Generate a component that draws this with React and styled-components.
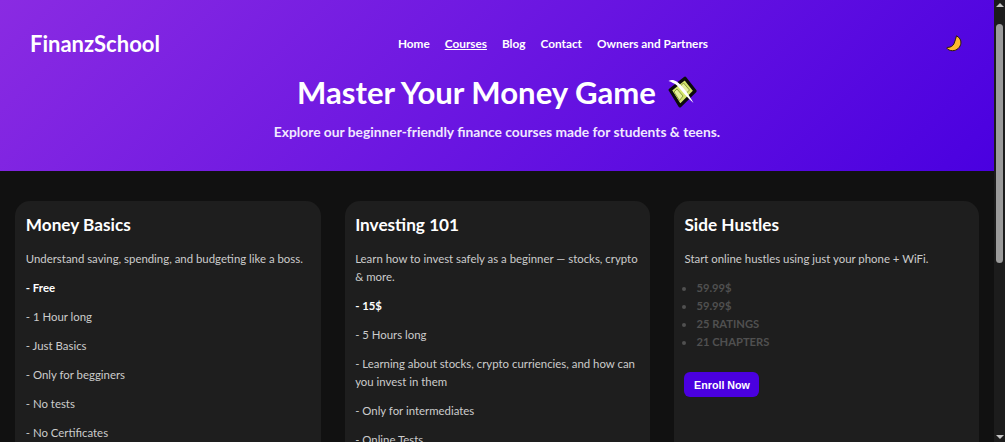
import React from "react";
import styled, { createGlobalStyle } from "styled-components";

const Global = createGlobalStyle`
  html { background: #111; }
  body { margin: 0; background: #111; font-family: "Lato", "Noto Sans", sans-serif; }
  html::-webkit-scrollbar { display: none; }
`;

const Page = styled.div`
  padding-right: 11px;
`;
const Scrollbar = styled.div`
  position: fixed;
  top: 0;
  right: 0;
  bottom: 0;
  width: 11px;
  background: #1c1c1c;
`;
const ScrollThumb = styled.div`
  position: absolute;
  top: 24px;
  left: 2px;
  width: 7px;
  height: 239px;
  border-radius: 4px;
  background: #9b9b9b;
`;
const ScrollArrow = styled.div`
  position: absolute;
  left: 2px;
  ${(p) => (p.$down ? "bottom: 3px;" : "top: 3px;")}
  border-left: 4px solid transparent;
  border-right: 4px solid transparent;
  ${(p) => (p.$down ? "border-top: 4px solid #c4c4c4;" : "border-bottom: 4px solid #c4c4c4;")}
`;

const Header = styled.header`
  height: 171px;
  box-sizing: border-box;
  padding-top: 28px;
  background: linear-gradient(135deg, #8a2be2, #4a00e0);
  color: #fff;
  text-align: center;
`;
const Nav = styled.nav`
  display: flex;
  justify-content: space-between;
  align-items: center;
  height: 30px;
  padding: 0 32px 0 30px;
`;
const Logo = styled.div`
  font-size: 22px;
  font-weight: 700;
`;
const Links = styled.div`
  display: flex;
  gap: 15px;
  font-size: 11.8px;
  font-weight: 700;
`;
const NavLink = styled.a`
  color: #fff;
  text-decoration: ${(p) => (p.$active ? "underline" : "none")};
`;
const Toggle = styled.div`
  display: flex;
`;
const Title = styled.h1`
  display: flex;
  justify-content: center;
  align-items: center;
  gap: 12px;
  margin: 14px 0 0;
  height: 40px;
  font-size: 31.100px;
  line-height: 40px;
  font-weight: 700;
`;
const Subtitle = styled.p`
  margin: 11px 0 0;
  font-size: 13.8px;
  line-height: 18px;
  font-weight: 700;
  color: #f1e8ff;
`;
const Grid = styled.main`
  display: grid;
  grid-template-columns: repeat(3, 1fr);
  gap: 24px;
  padding: 30px 14.700px 30px 15.300px;
  min-height: 558px;
  box-sizing: border-box;
`;
const Card = styled.section`
  background: #1e1e1e;
  border-radius: 15px;
  padding: 12px 10.500px;
`;
const CardTitle = styled.h2`
  margin: 0 0 13px;
  font-size: 17.200px;
  line-height: 24px;
  font-weight: 700;
  color: #fff;
`;
const Line = styled.p`
  margin: 0 0 11px;
  font-size: 11.400px;
  line-height: 18px;
  font-weight: ${(p) => (p.$bold ? 700 : 400)};
  color: ${(p) => (p.$bold ? "#fff" : "#ccc")};
`;
const Stats = styled.ul`
  margin: 0 0 21px;
  padding: 0 0 0 12px;
`;
const Stat = styled.li`
  font-size: 11.200px;
  line-height: 18px;
  font-weight: 700;
  color: #505050;
`;
const Enroll = styled.button`
  display: block;
  width: 75px;
  height: 25px;
  padding: 0;
  border: none;
  border-radius: 6px;
  background: #4a00e0;
  color: #fff;
  font-family: "Liberation Sans", Arial, sans-serif;
  font-size: 10.700px;
  font-weight: 700;
`;

const Moon = () => (
  <svg width="16" height="17" viewBox="0 0 16 17" aria-hidden="true">
    <path d="M10.500 .8c3 1.700 4.800 4.200 4.400 7.400-.4 4-4 7.500-8.400 7.500-2.500 0-4.600-.9-5.900-2.700.2-.4.5-.6 1-.6 3 0 5.200-1.300 6.400-3.700 1.100-2.500 1.700-5.200 2.500-7.900z" fill="#fdb92e" stroke="#2b1a05" strokeWidth="1" strokeLinejoin="round" />
  </svg>
);

const Money = () => (
  <svg width="29" height="32" viewBox="0 0 29 32" aria-hidden="true">
    <path d="M17 2.200 L27 15 L12 29.800 L2.200 14 Z" fill="#d3e56c" stroke="#0c0c0c" strokeWidth="3.200" strokeLinejoin="round" />
    <path d="M15.500 7 L21.500 14 L18 17.500 L12 10.500 Z" fill="#e4ef9a" stroke="#8d9f3c" strokeWidth="1" />
    <path d="M9 13 L15 20 L11.500 24.500 L6 16 Z" fill="#e4ef9a" stroke="#8d9f3c" strokeWidth="1" />
    <path d="M.5 5 C3 3.300 6 3.600 9 5.800 C14 9.500 20 17 25.500 27 C19 21.500 14 15 9 9.500 C6.500 7.500 3.500 6 .5 5 Z" fill="#fff" />
  </svg>
);

const links = ["Home", "Courses", "Blog", "Contact", "Owners and Partners"];

const courses = [
  {
    title: "Money Basics",
    intro: "Understand saving, spending, and budgeting like a boss.",
    price: "- Free",
    lines: ["- 1 Hour long", "- Just Basics", "- Only for begginers", "- No tests", "- No Certificates"],
  },
  {
    title: "Investing 101",
    intro: "Learn how to invest safely as a beginner — stocks, crypto & more.",
    price: "- 15$",
    lines: ["- 5 Hours long", "- Learning about stocks, crypto curriencies, and how can you invest in them", "- Only for intermediates", "- Online Tests"],
  },
  {
    title: "Side Hustles",
    intro: "Start online hustles using just your phone + WiFi.",
    stats: ["59.99$", "59.99$", "25 RATINGS", "21 CHAPTERS"],
  },
];

export default function App() {
  return (
    <>
      <Global />
      <Page>
        <Header>
          <Nav>
            <Logo>FinanzSchool</Logo>
            <Links>
              {links.map((l) => (
                <NavLink key={l} href="#" $active={l === "Courses"}>{l}</NavLink>
              ))}
            </Links>
            <Toggle><Moon /></Toggle>
          </Nav>
          <Title>Master Your Money Game <Money /></Title>
          <Subtitle>Explore our beginner-friendly finance courses made for students &amp; teens.</Subtitle>
        </Header>
        <Grid>
          {courses.map((c) => (
            <Card key={c.title}>
              <CardTitle>{c.title}</CardTitle>
              <Line>{c.intro}</Line>
              {c.price && <Line $bold>{c.price}</Line>}
              {c.lines && c.lines.map((l) => <Line key={l}>{l}</Line>)}
              {c.stats && (
                <Stats>
                  {c.stats.map((s, i) => <Stat key={i}>{s}</Stat>)}
                </Stats>
              )}
              <Enroll>Enroll Now</Enroll>
            </Card>
          ))}
        </Grid>
      </Page>
      <Scrollbar>
        <ScrollArrow />
        <ScrollThumb />
        <ScrollArrow $down />
      </Scrollbar>
    </>
  );
}
